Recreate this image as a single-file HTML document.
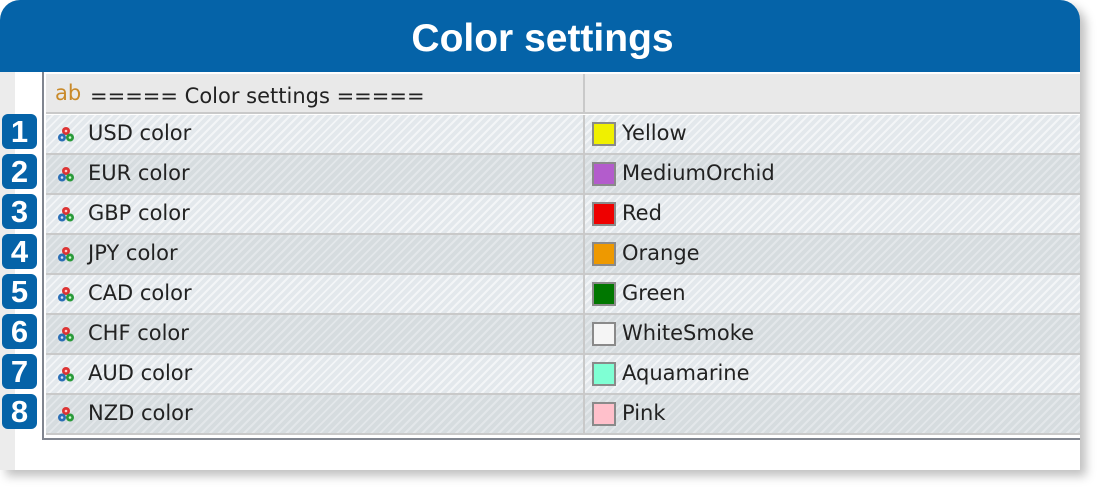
<!DOCTYPE html>
<html><head><meta charset="utf-8"><style>
body{margin:0;width:1100px;height:490px;background:#fff;position:relative;overflow:hidden;font-family:"DejaVu Sans","Liberation Sans",sans-serif;}
.card{position:absolute;left:0;top:0;width:1080px;height:470px;background:#fff;border-radius:20px 20px 0 0;box-shadow:6px 6px 10px rgba(0,0,0,.25);overflow:hidden}
.hd{position:absolute;left:0;top:0;width:1080px;height:72px;background:#0563a8;color:#fff;font:bold 39px "Liberation Sans",sans-serif;text-align:center;line-height:78px;padding-left:5px;box-sizing:border-box}
.strip{position:absolute;left:0;top:72px;width:15px;height:398px;background:#ececec}
.tbl{position:absolute;left:42px;top:72px;width:1040px;height:366px;border-left:2px solid #80858f;border-bottom:2px solid #80858f;background:#fff}
.row{position:absolute;left:2px;width:1036px;height:38px;border-bottom:2px solid #c9c9c9}
.row .c1{position:absolute;left:0;top:0;width:537px;height:38px;border-right:2px solid #c9c9c9}
.row span{position:absolute;font-size:21px;color:#222;top:6px}
.h{top:0;background:#e9e9e9}
.o{background:repeating-linear-gradient(135deg,#e3e8ec 0 4px,#f3f5f7 4px 6px)}
.e{background:repeating-linear-gradient(135deg,#d6dcdf 0 4px,#e3e7ea 4px 6px)}
.sw{position:absolute;left:546px;top:7px;width:20px;height:20px;border:2px solid #8a8a8a}
.ic{position:absolute;left:10px;top:10px;width:20px;height:20px}
.n{position:absolute;left:2px;width:35px;height:35px;background:#0563a8;border-radius:6px;color:#fff;font:bold 31px "Liberation Sans",sans-serif;text-align:center;line-height:36px}
</style></head><body>
<div class="card">
<div class="hd">Color settings</div>
<div class="strip"></div>
<div class="tbl">
<div class="row h" style="top:2px"><div class="c1"></div><span style="left:9px;color:#c98a2a;top:7px">ab</span><span style="left:44px;top:10px">===== Color settings =====</span></div>
</div>
</div>
<div id="rows"></div>
<script>
var d=[["USD","#f0f000","Yellow"],["EUR","#b35ccc","MediumOrchid"],["GBP","#ee0000","Red"],["JPY","#ee9900","Orange"],["CAD","#007700","Green"],["CHF","#f5f5f5","WhiteSmoke"],["AUD","#7fffd4","Aquamarine"],["NZD","#ffc0cb","Pink"]];
var h="";
d.forEach(function(r,i){var y=115+i*40;
h+='<div class="row '+(i%2?'e':'o')+'" style="left:46px;width:1034px;top:'+y+'px"><div class="c1"></div>'+
'<svg class="ic" viewBox="0 0 20 20"><circle cx="10" cy="6" r="4" fill="#d33"/><circle cx="6" cy="12.5" r="4" fill="#2a6fb5"/><circle cx="14" cy="12.5" r="4" fill="#2a9a3a"/><circle cx="10" cy="6" r="1.3" fill="#fcc"/><circle cx="6" cy="12.5" r="1.3" fill="#cdf"/><circle cx="14" cy="12.5" r="1.3" fill="#cfc"/></svg>'+
'<span style="left:42px">'+r[0]+' color</span><div class="sw" style="background:'+r[1]+'"></div><span style="left:576px">'+r[2]+'</span></div>'+
'<div class="n" style="top:'+(y-1)+'px">'+(i+1)+'</div>';});
document.getElementById("rows").innerHTML=h;
</script>
</body></html>
